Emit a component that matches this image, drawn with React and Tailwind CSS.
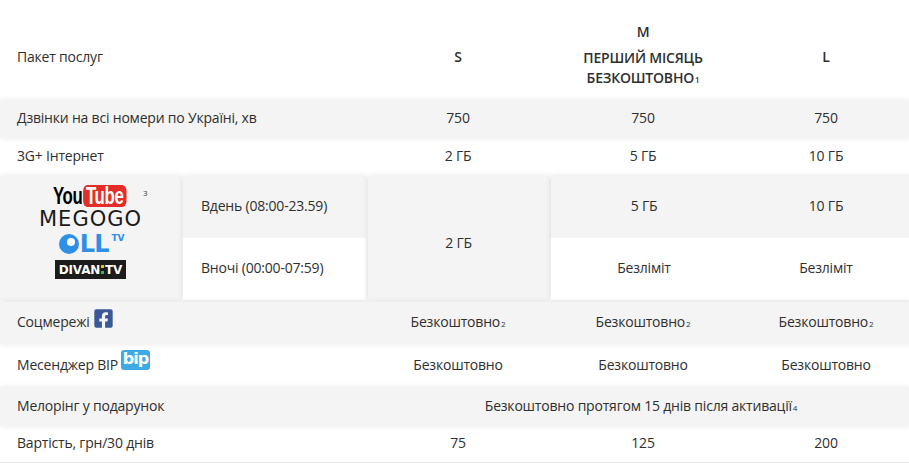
import { FaFacebookSquare } from "react-icons/fa";

const cols = "grid grid-cols-[182px_185px_182px_188px_178px]";
const gray = "bg-[#f4f4f4] shadow-[0_0_6px_rgba(0,0,0,0.09)] relative";

function Sup({ children }) {
  return <span className="text-[8px] ml-[1px]">{children}</span>;
}

function Logos() {
  return (
    <div className="relative flex flex-col items-center pt-[9px]">
      {/* YouTube */}
      <div className="w-[73px] h-[22px] -ml-[2px]">
        <div className="flex items-center h-[22px] whitespace-nowrap origin-left scale-x-[0.7] font-bold text-[24px] leading-none tracking-[-0.5px] [font-family:'Liberation_Sans',sans-serif]">
          <span className="text-black">You</span>
          <span className="ml-[1px] rounded-[6px] bg-[#e52d27] px-[4px] h-[22px] flex items-center text-white">
            Tube
          </span>
        </div>
      </div>
      <span className="absolute left-[143px] top-[11px] text-[8px] text-[#333]">3</span>
      {/* MEGOGO */}
      <div className="h-[22px] mt-[1px] text-[21px] leading-[22px] tracking-[1px] text-[#1a1a1a] [font-family:'DejaVu_Sans',sans-serif]">
        MEGOGO
      </div>
      {/* OLL TV */}
      <div className="flex items-end h-[20px] mt-[4px] ml-[2px]">
        <svg width="20" height="20" viewBox="0 0 20 20">
          <circle cx="10" cy="10" r="10" fill="#2e8fe6" />
          <circle cx="12" cy="8" r="4" fill="#fff" />
        </svg>
        <span className="text-[24px] leading-[20px] font-bold text-[#2e8fe6] [font-family:'DejaVu_Sans',sans-serif] tracking-[-1px] ml-[1px]">
          LL
        </span>
        <span className="self-start text-[9px] leading-none font-bold text-[#2e8fe6] [font-family:'DejaVu_Sans',sans-serif] ml-[3px]">
          TV
        </span>
      </div>
      {/* DIVAN:TV */}
      <div className="mt-[6px] bg-[#1c1c1c] px-[4px] h-[19px] flex items-center text-[12px] font-bold text-white [font-family:'DejaVu_Sans',sans-serif]">
        DIVAN
        <span className="flex flex-col mx-[1px] gap-[3px]">
          <span className="block w-[3px] h-[3px] bg-[#f2c200]" />
          <span className="block w-[3px] h-[3px] bg-[#4caf50]" />
        </span>
        TV
      </div>
    </div>
  );
}

export default function App() {
  return (
    <div className="w-[909px] h-[463px] overflow-hidden bg-white text-[14px] tracking-[-0.2px] text-[#2f2f2f] [font-family:'Open_Sans',sans-serif]">
      {/* Header */}
      <div className={`${cols} h-[100px] items-center pt-[12px]`}>
        <div className="col-span-2 pl-[17px]">Пакет послуг</div>
        <div className="text-center font-semibold">S</div>
        <div className="text-center font-semibold leading-[20px]">
          <div className="mb-[6px]">M</div>
          <div>ПЕРШИЙ МІСЯЦЬ</div>
          <div>
            БЕЗКОШТОВНО<Sup>1</Sup>
          </div>
        </div>
        <div className="text-center font-semibold">L</div>
      </div>

      {/* Calls */}
      <div className={`${cols} h-[38px] items-center pb-[3px] ${gray}`}>
        <div className="col-span-2 pl-[17px]">Дзвінки на всі номери по Україні, хв</div>
        <div className="text-center">750</div>
        <div className="text-center">750</div>
        <div className="text-center">750</div>
      </div>

      {/* Internet */}
      <div className={`${cols} h-[38px] items-center pb-[3px]`}>
        <div className="col-span-2 pl-[17px]">3G+ Інтернет</div>
        <div className="text-center">2 ГБ</div>
        <div className="text-center">5 ГБ</div>
        <div className="text-center">10 ГБ</div>
      </div>

      {/* Video services */}
      <div className="flex w-[915px] h-[124px] gap-[2px] relative">
        <div className="w-[181px] bg-[#f4f4f4] shadow-[0_0_6px_rgba(0,0,0,0.1)]">
          <Logos />
        </div>
        <div className="w-[183px] flex flex-col shadow-[0_0_6px_rgba(0,0,0,0.1)]">
          <div className="h-[62px] bg-[#f4f4f4] flex items-center pl-[18px] pb-[3px]">Вдень (08:00-23.59)</div>
          <div className="h-[62px] bg-white flex items-center pl-[18px] pb-[3px]">Вночі (00:00-07:59)</div>
        </div>
        <div className="w-[181px] bg-[#f4f4f4] flex items-center justify-center pt-[8px] shadow-[0_0_6px_rgba(0,0,0,0.1)]">
          2 ГБ
        </div>
        <div className="flex-1 flex flex-col shadow-[0_0_6px_rgba(0,0,0,0.1)]">
          <div className="h-[62px] bg-[#f4f4f4] grid grid-cols-[186px_178px] items-center pb-[3px] shadow-[0_1px_3px_rgba(0,0,0,0.06)]">
            <div className="text-center">5 ГБ</div>
            <div className="text-center">10 ГБ</div>
          </div>
          <div className="h-[62px] bg-white grid grid-cols-[186px_178px] items-center pb-[3px]">
            <div className="text-center">Безліміт</div>
            <div className="text-center">Безліміт</div>
          </div>
        </div>
      </div>

      {/* Social */}
      <div className={`${cols} h-[42px] items-center pb-[3px] ${gray} mt-[2px]`}>
        <div className="col-span-2 pl-[17px] flex items-center gap-[3px]">
          Соцмережі
          <FaFacebookSquare className="text-[#3b5998] -mt-[6px]" size={21} />
        </div>
        <div className="text-center">
          Безкоштовно<Sup>2</Sup>
        </div>
        <div className="text-center">
          Безкоштовно<Sup>2</Sup>
        </div>
        <div className="text-center">
          Безкоштовно<Sup>2</Sup>
        </div>
      </div>

      {/* BIP */}
      <div className={`${cols} h-[43px] items-center pb-[3px]`}>
        <div className="col-span-2 pl-[17px] flex items-center gap-[3px]">
          Месенджер BIP
          <span className="-mt-[8px] inline-flex items-center justify-center h-[20px] w-[29px] rounded-[3px] bg-[#3fa9e5] text-white font-bold text-[16px] leading-none [font-family:'DejaVu_Sans',sans-serif] tracking-[-1px] pb-[2px]">
            bip
          </span>
        </div>
        <div className="text-center">Безкоштовно</div>
        <div className="text-center">Безкоштовно</div>
        <div className="text-center">Безкоштовно</div>
      </div>

      {/* Melody */}
      <div className={`${cols} h-[39px] items-center pb-[3px] ${gray}`}>
        <div className="col-span-2 pl-[17px]">Мелорінг у подарунок</div>
        <div className="col-span-3 text-center">
          Безкоштовно протягом 15 днів після активації<Sup>4</Sup>
        </div>
      </div>

      {/* Price */}
      <div className={`${cols} h-[38px] items-center pb-[3px] border-b-2 border-[#e6e6e6]`}>
        <div className="col-span-2 pl-[17px]">Вартість, грн/30 днів</div>
        <div className="text-center">75</div>
        <div className="text-center">125</div>
        <div className="text-center">200</div>
      </div>
    </div>
  );
}
